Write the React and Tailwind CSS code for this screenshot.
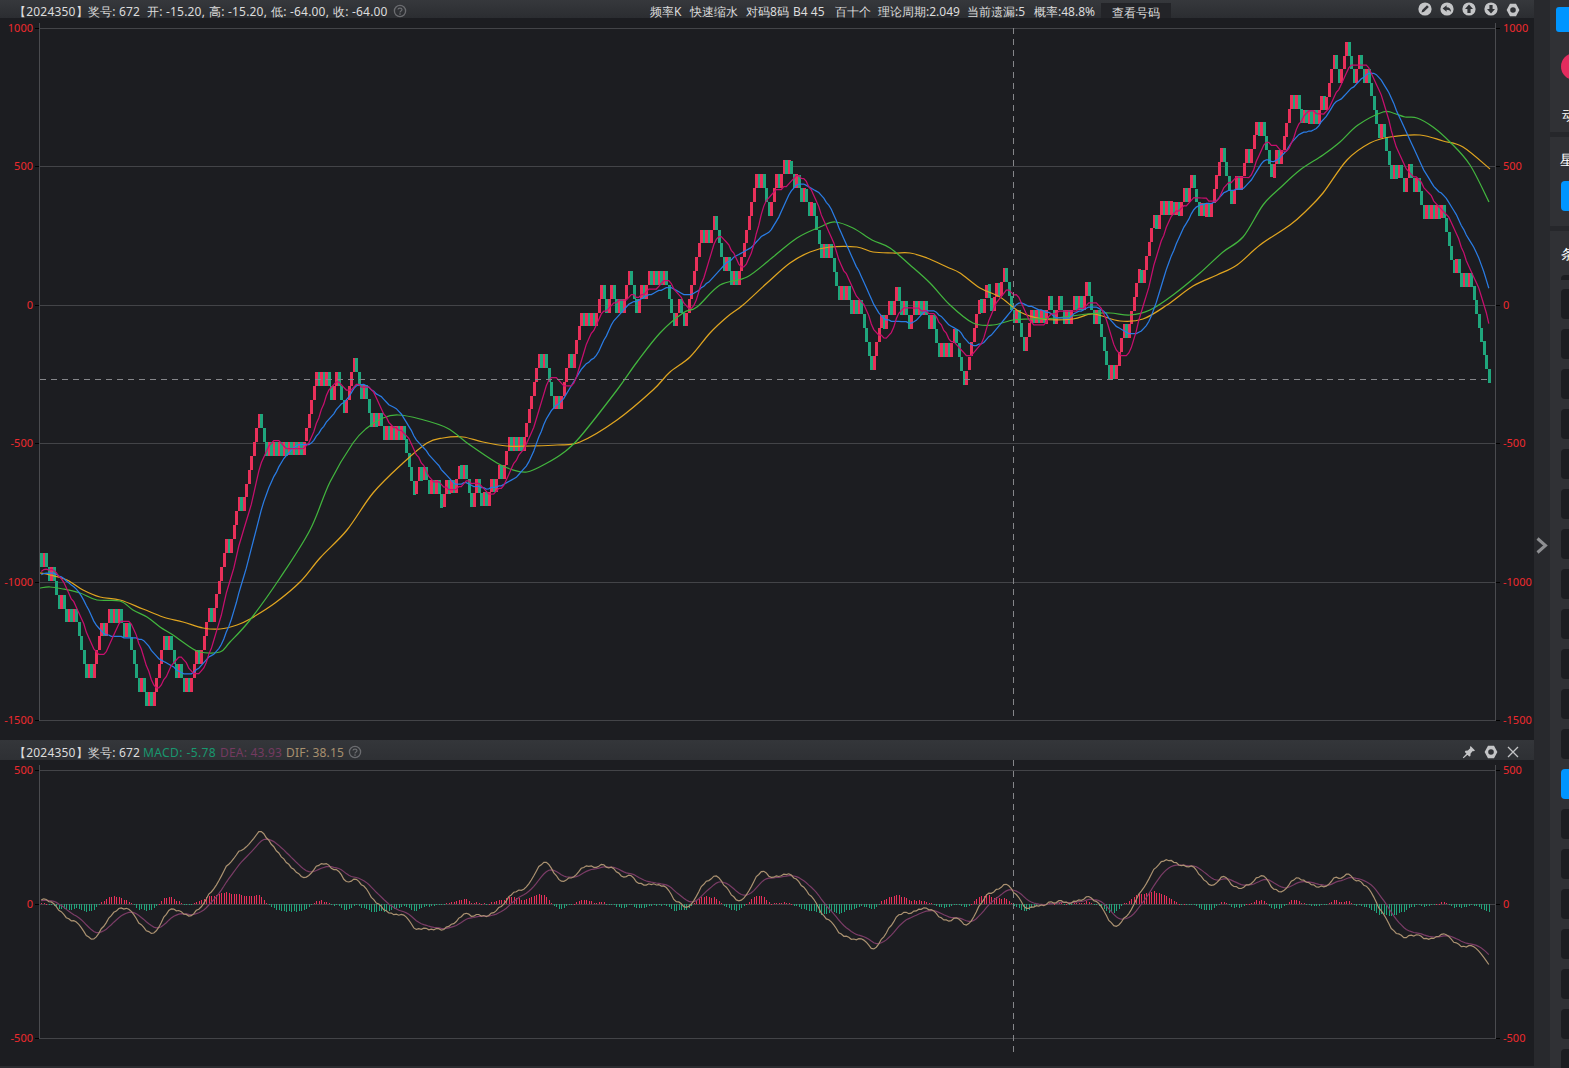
import React from 'react';

const P = [[40,560],[48,573],[55,587],[60,598],[67,612],[72,612],[75,627],[80,653],[85,665],[93,665],[97,650],[100,635],[105,620],[122,620],[127,633],[130,658],[133,673],[136,687],[141,672],[147,698],[154,698],[157,680],[160,663],[165,640],[172,640],[175,667],[185,680],[187,693],[191,680],[193,663],[198,663],[203,633],[207,620],[212,620],[213,600],[218,593],[222,573],[225,557],[229,540],[231,520],[236,505],[243,505],[245,492],[250,477],[255,427],[258,420],[262,433],[265,447],[285,447],[288,457],[292,443],[302,442],[305,423],[310,393],[312,383],[330,383],[332,397],[337,382],[343,408],[348,380],[353,365],[358,393],[363,393],[368,413],[372,432],[377,417],[382,430],[402,430],[407,463],[412,482],[422,475],[428,493],[438,493],[441,505],[447,490],[453,490],[460,462],[465,482],[472,502],[478,487],[487,513],[490,497],[497,470],[502,483],[507,460],[510,440],[525,440],[528,410],[535,370],[540,367],[545,365],[548,377],[555,407],[558,400],[563,377],[568,350],[573,363],[578,333],[582,320],[595,318],[600,297],[602,290],[607,303],[612,288],[615,307],[622,302],[628,273],[635,300],[638,313],[642,293],[645,283],[657,282],[657,268],[663,282],[667,290],[670,307],[674,322],[679,307],[684,320],[688,300],[693,263],[698,240],[708,233],[713,220],[716,233],[720,253],[723,260],[728,273],[732,287],[737,270],[740,243],[745,217],[750,200],[752,185],[762,185],[766,198],[768,212],[773,198],[777,183],[780,183],[783,168],[788,167],[793,180],[800,193],[808,207],[813,220],[817,242],[822,260],[827,245],[830,260],[833,277],[837,285],[843,298],[847,298],[851,310],[855,297],[860,313],[865,343],[870,363],[875,343],[878,317],[882,307],[885,320],[892,305],[898,290],[902,307],[908,330],[913,317],[916,302],[920,317],[925,302],[930,320],[937,340],[943,353],[948,353],[955,327],[958,343],[965,378],[970,357],[975,333],[980,307],[983,292],[990,292],[993,307],[996,290],[1002,277],[1006,277],[1009,290],[1013,307],[1015,317],[1018,317],[1022,330],[1025,343],[1028,327],[1031,313],[1045,313],[1048,297],[1053,315],[1058,297],[1062,310],[1066,323],[1070,308],[1078,308],[1083,293],[1087,293],[1091,307],[1095,318],[1100,332],[1103,347],[1107,372],[1115,372],[1120,343],[1123,328],[1128,328],[1132,300],[1137,270],[1142,270],[1147,242],[1150,228],[1158,228],[1162,212],[1180,212],[1183,195],[1190,182],[1195,195],[1200,207],[1208,207],[1212,187],[1218,150],[1222,157],[1227,183],[1232,203],[1235,188],[1242,173],[1245,160],[1252,143],[1255,130],[1262,130],[1265,143],[1270,170],[1275,155],[1280,150],[1285,127],[1293,97],[1297,110],[1305,110],[1312,123],[1317,108],[1325,108],[1328,87],[1333,65],[1338,77],[1343,57],[1346,48],[1350,63],[1352,75],[1358,62],[1360,75],[1367,75],[1369,87],[1372,102],[1375,117],[1380,128],[1383,143],[1387,167],[1392,182],[1397,167],[1403,193],[1410,165],[1417,193],[1422,217],[1442,217],[1445,228],[1450,243],[1455,267],[1458,277],[1468,277],[1470,297],[1473,308],[1478,322],[1482,335],[1484,348],[1487,362],[1489,375]];
const GREEN = [[40,588],[50,587],[63,589],[80,593],[97,600],[120,601],[133,610],[147,617],[160,627],[173,635],[187,645],[200,652],[220,652],[230,642],[250,620],[280,578],[310,530],[330,482],[353,443],[367,428],[383,418],[398,415],[420,419],[447,428],[470,445],[497,463],[510,469],[527,472],[547,463],[563,453],[580,437],[617,390],[637,362],[660,333],[683,313],[697,307],[720,285],[747,277],[773,257],[797,238],[820,227],[835,222],[853,228],[872,240],[890,248],[910,265],[930,283],[950,305],[973,323],[993,325],[1013,320],[1030,319],[1057,318],[1087,314],[1110,313],[1130,315],[1150,310],[1173,295],[1200,273],[1223,252],[1243,237],[1263,205],[1280,188],[1300,170],[1323,155],[1340,142],[1358,125],[1383,112],[1393,113],[1405,117],[1417,118],[1433,127],[1450,142],[1470,165],[1489,202]];
const YELLOW = [[40,573],[50,575],[67,580],[83,590],[100,597],[120,600],[143,609],[163,617],[183,622],[203,628],[220,629],[237,625],[250,619],[275,603],[300,582],[320,558],[347,530],[373,493],[403,463],[427,443],[443,438],[463,437],[483,442],[507,446],[530,446],[557,445],[580,442],[617,420],[653,390],[670,372],[690,357],[710,333],[727,317],[743,305],[767,283],[790,263],[810,252],[830,247],[857,247],[873,252],[893,253],[910,253],[927,258],[947,267],[960,273],[980,288],[1000,297],[1020,312],[1043,319],[1073,319],[1093,314],[1120,321],[1143,319],[1167,305],[1193,286],[1217,275],[1237,265],[1260,245],[1290,225],[1307,210],[1323,193],[1347,160],[1370,143],[1390,137],[1420,135],[1443,141],[1463,147],[1490,169]];
const OFF = [[40,4.5],[147,5],[353,3],[487,-1],[785,-1],[870,1],[965,2],[1002,-4],[1108,-3.7],[1346,5],[1489,0]];

const STEP = 2.5, H = 13.83, BASE = 382.7;
const N = 580;
function lerp(T, x) {
  for (let i = 1; i < T.length; i++) {
    if (x <= T[i][0]) {
      const a = T[i - 1], b = T[i];
      const d = b[0] - a[0] || 1;
      return a[1] + ((b[1] - a[1]) * (x - a[0])) / d;
    }
  }
  return T[T.length - 1][1];
}
const bricks = [];
const closes = [];
let lvl = Math.round((BASE + 4.5 - 553) / H);
for (let i = 0; i < N; i++) {
  const x = 40 + i * STEP;
  const off = lerp(OFF, x);
  const t = (BASE + off - lerp(P, x + 1.3)) / H;
  const up = t > lvl;
  const next = up ? lvl + 1 : lvl - 1;
  bricks.push({ x, y: BASE + off - Math.max(lvl, next) * H, up });
  lvl = next;
  closes.push(BASE + off - lvl * H);
}
function ma(n, start) {
  const pts = [];
  for (let i = 0; i < N; i++) {
    let s = 0;
    for (let j = i - n + 1; j <= i; j++) s += j < 0 ? start : closes[j];
    pts.push([40 + i * STEP + 1.3, s / n]);
  }
  return pts;
}
const poly = (pts) => pts.map((p) => p[0].toFixed(1) + ',' + p[1].toFixed(1)).join(' ');
function spline(pts) {
  let d = 'M' + pts[0][0] + ' ' + pts[0][1];
  for (let i = 0; i < pts.length - 1; i++) {
    const p0 = pts[i - 1] || pts[i], p1 = pts[i], p2 = pts[i + 1], p3 = pts[i + 2] || p2;
    const c1x = p1[0] + (p2[0] - p0[0]) / 6, c1y = p1[1] + (p2[1] - p0[1]) / 6;
    const c2x = p2[0] - (p3[0] - p1[0]) / 6, c2y = p2[1] - (p3[1] - p1[1]) / 6;
    d += 'C' + c1x.toFixed(1) + ' ' + c1y.toFixed(1) + ' ' + c2x.toFixed(1) + ' ' + c2y.toFixed(1) + ' ' + p2[0] + ' ' + p2[1];
  }
  return d;
}
const val = (y) => (305 - y) / 0.2766;
const ZERO = 904;
const yM = (v) => ZERO - v * 0.268 * 1.45;
const v0 = val(closes[0]);
let e12 = v0 + 6, e26 = v0 - 6, dea = 8;
const difPts = [], deaPts = [], hist = [];
closes.forEach((c, i) => {
  const v = val(c);
  e12 += (v - e12) * (2 / 13);
  e26 += (v - e26) * (2 / 27);
  const dif = e12 - e26;
  dea += (dif - dea) * (2 / 10);
  const x = 40 + i * STEP + 1.3;
  difPts.push([x, yM(dif)]);
  deaPts.push([x, yM(dea)]);
  hist.push({ x, h: (dif - dea) * 0.268 * 1.1 });
});

const font = "font-['Noto_Sans','Noto_Sans_CJK_SC',sans-serif]";
const axisFont = "font-['Liberation_Sans',sans-serif]";

function Label({ y, right, children }) {
  return right ? (
    <div className={'absolute left-[1503px] text-[11px] leading-[14px] text-[#ee2a2e] ' + axisFont} style={{ top: y - 7 }}>{children}</div>
  ) : (
    <div className={'absolute left-0 w-[33px] text-right text-[11px] leading-[14px] text-[#ee2a2e] ' + axisFont} style={{ top: y - 7 }}>{children}</div>
  );
}
function Txt({ x, c = 'text-[#dcdcdc]', y = 4, t = 'tracking-[0.2px]', children }) {
  return <span className={'absolute text-[12px] leading-[16px] whitespace-nowrap ' + font + ' ' + c + ' ' + t} style={{ left: x, top: y }}>{children}</span>;
}
function Help({ x, y }) {
  return (
    <svg className="absolute" style={{ left: x, top: y }} width="14" height="14" viewBox="0 0 14 14">
      <circle cx="7" cy="7" r="5.6" fill="none" stroke="#6b6c70" strokeWidth="1.3" />
      <path d="M5 5.6C5 3.6 9 3.6 9 5.6C9 7 7 6.9 7 8.4" fill="none" stroke="#6b6c70" strokeWidth="1.2" />
      <circle cx="7" cy="10.1" r=".8" fill="#6b6c70" />
    </svg>
  );
}
const ICON = '#c4c5c7';
function Nut({ x, y, size = 14 }) {
  return (
    <svg className="absolute" style={{ left: x, top: y }} width={size} height={size} viewBox="0 0 14 14">
      <path fillRule="evenodd" fill={ICON} d="M4 .8H10L13.4 7L10 13.2H4L.6 7ZM7 4.2A2.8 2.8 0 1 0 7 9.8A2.8 2.8 0 1 0 7 4.2Z" />
    </svg>
  );
}
function Round({ x, d }) {
  return (
    <svg className="absolute top-[2px]" style={{ left: x }} width="14" height="14" viewBox="0 0 14 14">
      <circle cx="7" cy="7" r="6.6" fill={ICON} />
      <path d={d} fill="#303236" />
    </svg>
  );
}

export default function App() {
  return (
    <div className={'relative w-[1569px] h-[1068px] overflow-hidden bg-[#1c1d21] ' + font}>
      <svg className="absolute left-0 top-0" width="1569" height="1068">
        {[28, 166, 305, 443, 582, 720, 770, 904, 1038].map((y) => (
          <g key={y}>
            <line x1="40" x2="1495" y1={y + 0.5} y2={y + 0.5} stroke="#434448" />
            <line x1="35" x2="39" y1={y + 0.5} y2={y + 0.5} stroke="#000" />
            <line x1="1496" x2="1500" y1={y + 0.5} y2={y + 0.5} stroke="#000" />
          </g>
        ))}
        <line x1="39.5" x2="39.5" y1="23" y2="721" stroke="#4a4b4f" />
        <line x1="1495.5" x2="1495.5" y1="23" y2="721" stroke="#4a4b4f" />
        <line x1="39.5" x2="39.5" y1="765" y2="1039" stroke="#4a4b4f" />
        <line x1="1495.5" x2="1495.5" y1="765" y2="1039" stroke="#4a4b4f" />

        <g shapeRendering="crispEdges">
          {bricks.map((b, i) => (
            <rect key={i} x={b.x} y={b.y} width="3" height={H} fill={b.up ? '#e8305a' : '#1fa67c'} />
          ))}
        </g>
        <path d={spline(YELLOW)} fill="none" stroke="#e0a520" strokeWidth="1.25" />
        <path d={spline(GREEN)} fill="none" stroke="#42b53e" strokeWidth="1.25" />
        <polyline points={poly(ma(20, 575))} fill="none" stroke="#2a7ce4" strokeWidth="1.25" />
        <polyline points={poly(ma(10, 572))} fill="none" stroke="#c70f6e" strokeWidth="1.25" />

        <line x1="40" x2="1491" y1="379.5" y2="379.5" stroke="#85868a" strokeDasharray="6 5" />
        <line x1="1013.5" x2="1013.5" y1="28" y2="720" stroke="#85868a" strokeDasharray="6 5" />
        <line x1="1013.5" x2="1013.5" y1="760" y2="1053" stroke="#85868a" strokeDasharray="6 5" />

        <g shapeRendering="crispEdges">
          {hist.map((b, i) => (
            <rect key={i} x={Math.round(b.x)} y={b.h > 0 ? ZERO - b.h : ZERO} width="1" height={Math.max(Math.abs(b.h), 1)} fill={b.h > 0 ? '#e8305a' : '#1fa67c'} />
          ))}
        </g>
        <polyline points={poly(deaPts)} fill="none" stroke="#7a3c66" strokeWidth="1.2" />
        <polyline points={poly(difPts)} fill="none" stroke="#ab9271" strokeWidth="1.2" />
      </svg>

      <Label y={28}>1000</Label><Label y={166}>500</Label><Label y={305}>0</Label><Label y={443}>-500</Label><Label y={582}>-1000</Label><Label y={720}>-1500</Label>
      <Label y={28} right>1000</Label><Label y={166} right>500</Label><Label y={305} right>0</Label><Label y={443} right>-500</Label><Label y={582} right>-1000</Label><Label y={720} right>-1500</Label>
      <Label y={770}>500</Label><Label y={904}>0</Label><Label y={1038}>-500</Label>
      <Label y={770} right>500</Label><Label y={904} right>0</Label><Label y={1038} right>-500</Label>

      <div className="absolute left-0 top-0 w-[1534px] h-[18px] bg-gradient-to-b from-[#36383c] to-[#2b2d31]" />
      <div className="absolute left-[1101px] top-[3px] w-[70px] h-[15px] bg-[#232428]" />
      <Txt x={14}>【2024350】奖号: 672</Txt>
      <Txt x={147}>开: -15.20,</Txt>
      <Txt x={209}>高: -15.20,</Txt>
      <Txt x={271}>低: -64.00,</Txt>
      <Txt x={333}>收: -64.00</Txt>
      <Help x={393} y={4} />
      <Txt x={650} t="">频率K</Txt>
      <Txt x={690} t="">快速缩水</Txt>
      <Txt x={746} t="">对码8码</Txt>
      <Txt x={793} t="">B4 45</Txt>
      <Txt x={835} t="">百十个</Txt>
      <Txt x={878} t="">理论周期:2.049</Txt>
      <Txt x={967} t="">当前遗漏:5</Txt>
      <Txt x={1034} t="">概率:48.8%</Txt>
      <Txt x={1112} y={5} t="">查看号码</Txt>
      <Round x={1418} d="M3.5 10.5L4.2 8L9 3.2L10.8 5L6 9.8Z" />
      <Round x={1440} d="M2.6 6.5L6.6 3.2V5.2C9.5 5.2 11 7 11 10C10 8.4 8.6 7.7 6.6 7.7V9.7Z" />
      <Round x={1462} d="M7 2.6L11 7H8.6V11H5.4V7H3Z" />
      <Round x={1484} d="M7 11.4L3 7H5.4V3H8.6V7H11Z" />
      <Nut x={1506} y={3} />

      <div className="absolute left-0 top-[740px] w-[1534px] h-[20px] bg-gradient-to-b from-[#34363a] to-[#2e3034]" />
      <Txt x={14} y={745}>【2024350】奖号: 672</Txt>
      <Txt x={143} y={745} c="text-[#18986f]" t="tracking-[0.4px]">MACD: -5.78</Txt>
      <Txt x={220} y={745} c="text-[#743a60]">DEA: 43.93</Txt>
      <Txt x={286} y={745} c="text-[#a8906e]">DIF: 38.15</Txt>
      <Help x={348} y={745} />
      <svg className="absolute left-[1462px] top-[745px]" width="14" height="14" viewBox="0 0 14 14">
        <path fill={ICON} d="M8.6 1L13 5.4L11.8 6.2L10.8 6L8.6 8.6L8.4 11L7.2 11.4L2.8 7L3.4 5.8L5.8 5.6L8.2 3.2L8 2.2ZM4.6 8.4L5.8 9.6L1.6 13.2L.8 12.4Z" />
      </svg>
      <Nut x={1484} y={745} />
      <svg className="absolute left-[1507px] top-[746px]" width="12" height="12" viewBox="0 0 12 12">
        <path d="M1 1L11 11M11 1L1 11" stroke={ICON} strokeWidth="1.3" fill="none" />
      </svg>

      <div className="absolute left-[1534px] top-0 w-[16px] h-[1068px] bg-[#28292d]" />
      <svg className="absolute left-[1536px] top-[537px]" width="12" height="17" viewBox="0 0 12 17">
        <path d="M1.5 1.5L9.5 8.5L1.5 15.5" fill="none" stroke="#8e8f92" strokeWidth="3" />
      </svg>

      <div className="absolute left-[1550px] top-0 w-[19px] h-[1068px] overflow-hidden bg-[#303135]">
        <div className="absolute left-[6px] top-[7px] w-[20px] h-[25px] rounded-[3px] bg-[#0095ff]" />
        <div className="absolute left-[11px] top-[53px] w-[27px] h-[27px] rounded-full bg-[#e42c5e]" />
        <div className="absolute left-[12px] top-[106px] text-[14px] leading-[18px] text-white">动</div>
        <div className="absolute left-0 top-[132px] w-[19px] h-[5px] bg-[#26272b]" />
        <div className="absolute left-[10px] top-[151px] text-[14px] leading-[18px] text-white">星</div>
        <div className="absolute left-[11px] top-[181px] w-[20px] h-[30px] rounded-[4px] bg-[#0095ff]" />
        <div className="absolute left-0 top-[226px] w-[19px] h-[5px] bg-[#26272b]" />
        <div className="absolute left-[11px] top-[245px] text-[14px] leading-[18px] text-white">条</div>
        <div className="absolute left-[11px] top-[275px] w-[20px] h-[5px] rounded-t-[4px] bg-[#1c1d21]" />
        {[289, 329, 369, 409, 449, 489, 529, 569, 609, 649, 689, 729, 769, 809, 849, 889, 929, 969, 1009, 1049].map((y) => (
          <div key={y} className={'absolute left-[11px] w-[20px] h-[30px] rounded-[4px] ' + (y === 769 ? 'bg-[#0095ff]' : 'bg-[#1c1d21]')} style={{ top: y }} />
        ))}
      </div>
      <div className="absolute left-0 top-[1066px] w-[1550px] h-[2px] bg-[#2b2c30]" />
    </div>
  );
}
